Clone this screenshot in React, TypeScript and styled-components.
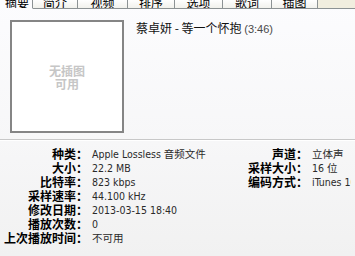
import React, { FC } from 'react'
import { styled, createGlobalStyle } from 'styled-components'

const GlobalStyle = createGlobalStyle`
    html, body {
        margin: 0;
        padding: 0;
        width: 355px;
        height: 256px;
        overflow: hidden;
    }
    body {
        background: linear-gradient(#fcfcfe, #f7f7f8 55%, #f1f1f1);
        font-family: "Noto Sans CJK SC", sans-serif;
        color: #000;
    }
`

const tabs = [
    { label: '摘要', width: 33, active: true },
    { label: '简介', width: 45 },
    { label: '视频', width: 50 },
    { label: '排序', width: 47 },
    { label: '选项', width: 48 },
    { label: '歌词', width: 49 },
    { label: '插图', width: 46 },
]

const general = [
    ['种类', 'Apple Lossless 音频文件'],
    ['大小', '22.2 MB'],
    ['比特率', '823 kbps'],
    ['采样速率', '44.100 kHz'],
    ['修改日期', '2013-03-15 18:40'],
    ['播放次数', '0'],
    ['上次播放时间', '不可用'],
]

const format = [
    ['声道', '立体声'],
    ['采样大小', '16 位'],
    ['编码方式', 'iTunes 10.0.1'],
]

const App: FC = () => {
    return (
        <Page>
            <GlobalStyle />
            <TabBar>
                {tabs.map(t => (
                    <Tab key={t.label} $w={t.width} $active={!!t.active}>
                        <TabText>{t.label}</TabText>
                    </Tab>
                ))}
                <TabFiller />
            </TabBar>
            <Top>
                <Artwork>
                    <NoArt>无插图<br />可用</NoArt>
                </Artwork>
                <Title>
                    蔡卓妍 - 等一个怀抱 <Duration>(3:46)</Duration>
                </Title>
            </Top>
            <Info>
                <Grid $labelW={84} $valueW={156}>
                    {general.map(([k, v]) => (
                        <React.Fragment key={k}>
                            <Label>{k}：</Label>
                            <Value>{v}</Value>
                        </React.Fragment>
                    ))}
                </Grid>
                <Grid $labelW={60} $valueW={43}>
                    {format.map(([k, v]) => (
                        <React.Fragment key={k}>
                            <Label>{k}：</Label>
                            <Value>{v}</Value>
                        </React.Fragment>
                    ))}
                </Grid>
            </Info>
        </Page>
    )
}

export default App

const Page = styled.div`
    width: 355px;
    height: 256px;
    overflow: hidden;
    display: flex;
    flex-direction: column;
`
const TabBar = styled.div`
    display: flex;
    height: 9px;
    overflow: hidden;
    flex-shrink: 0;
`
const Tab = styled.div<{ $w: number; $active: boolean }>`
    width: ${({ $w }) => $w}px;
    height: 9px;
    box-sizing: border-box;
    overflow: hidden;
    border-right: 1px solid #8c9294;
    border-bottom: 1px solid ${({ $active }) => ($active ? 'transparent' : '#8c9294')};
    background: ${({ $active }) => ($active ? '#fcfcfe' : 'linear-gradient(#fefefe, #f1f1ec)')};
    display: flex;
    justify-content: center;
    align-items: flex-end;
    &:first-child {
        justify-content: flex-end;
        padding-right: 3px;
    }
`
const TabText = styled.span`
    font-size: 12px;
    line-height: 14px;
    margin-bottom: -2px;
    color: #000;
    white-space: nowrap;
`
const TabFiller = styled.div`
    flex: 1;
    height: 9px;
    box-sizing: border-box;
    background: #f1eedf;
    border-bottom: 1px solid #8c9294;
`
const Top = styled.div`
    display: flex;
    align-items: flex-start;
    column-gap: 12px;
    padding: 11px 0 6px 10px;
    height: 130px;
    box-sizing: border-box;
    flex-shrink: 0;
`
const Artwork = styled.div`
    width: 114px;
    height: 113px;
    box-sizing: border-box;
    border: 2px solid #858585;
    background: #fff;
    display: flex;
    align-items: center;
    justify-content: center;
`
const NoArt = styled.div`
    font-size: 12px;
    line-height: 13px;
    font-weight: 700;
    color: #c6c6c6;
    text-align: center;
    margin-top: 1px;
`
const Title = styled.div`
    font-size: 12px;
    line-height: 15px;
    color: #111;
    white-space: nowrap;
`
const Duration = styled.span`
    font-family: "Liberation Sans", sans-serif;
    font-size: 11px;
    color: #4a4a4a;
`
const Info = styled.div`
    flex: 1;
    border-top: 1px solid #c8c8c8;
    box-shadow: inset 0 1px 0 #fff;
    display: flex;
    padding-top: 7px;
`
const Grid = styled.div<{ $labelW: number; $valueW: number }>`
    display: grid;
    grid-template-columns: ${({ $labelW, $valueW }) => `${$labelW}px ${$valueW}px`};
    grid-auto-rows: 14px;
    column-gap: 4px;
    align-content: start;
`
const Label = styled.div`
    font-size: 12px;
    line-height: 14px;
    font-weight: 700;
    text-align: right;
    white-space: nowrap;
    margin-right: -4px;
`
const Value = styled.div`
    font-family: "DejaVu Sans Condensed", "DejaVu Sans", "Noto Sans CJK SC", sans-serif;
    font-size: 10.5px;
    line-height: 14px;
    color: #2a2a2a;
    white-space: nowrap;
    overflow: hidden;
    padding-left: 4px;
`
